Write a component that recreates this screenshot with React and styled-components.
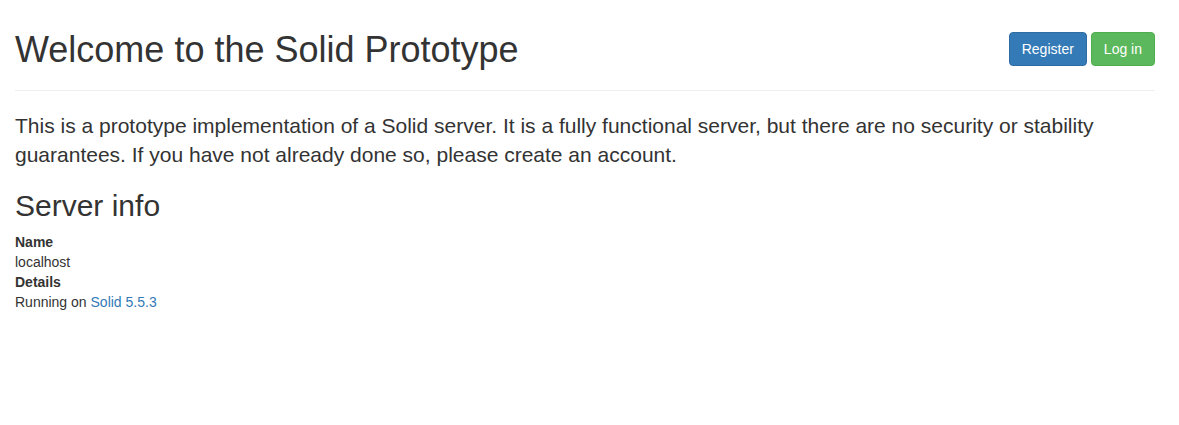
import React from 'react';
import styled, { createGlobalStyle } from 'styled-components';

const GlobalStyle = createGlobalStyle`
  html, body {
    margin: 0;
    padding: 0;
    background: #fff;
  }
  body {
    font-family: "Liberation Sans", Arial, Helvetica, sans-serif;
    font-size: 14px;
    line-height: 1.42857143;
    color: #333;
  }
  * {
    box-sizing: border-box;
  }
`

const Container = styled.div`
  width: 1170px;
  padding: 0 15px;
`

const PageHeader = styled.div`
  display: flex;
  justify-content: space-between;
  align-items: flex-start;
  padding: 30px 0 10px;
  margin-bottom: 20px;
  border-bottom: 1px solid #eee;
`

const Title = styled.h1`
  margin: 0 0 10px;
  font-size: 36px;
  font-weight: 500;
  line-height: 1.1;
`

const Actions = styled.div`
  display: flex;
  gap: 4px;
  margin-top: 2px;
`

const Button = styled.button`
  font-family: inherit;
  font-size: 14px;
  line-height: 1.42857143;
  padding: 6px 12px;
  color: #fff;
  border-radius: 4px;
  cursor: pointer;
  background: ${p => (p.$variant === 'success' ? '#5cb85c' : '#337ab7')};
  border: 1px solid ${p => (p.$variant === 'success' ? '#4cae4c' : '#2e6da4')};
`

const Lead = styled.p`
  margin: 0 0 20px;
  font-size: 21px;
  font-weight: 300;
  line-height: 1.4;
`

const SubTitle = styled.h2`
  margin: 20px 0 10px;
  font-size: 30px;
  font-weight: 500;
  line-height: 1.1;
`

const InfoList = styled.dl`
  margin: 0 0 20px;

  & dt {
    font-weight: 700;
  }
  & dd {
    margin: 0;
  }
  & a {
    color: #337ab7;
    text-decoration: none;
  }
`

export default function App() {
  return (
    <>
      <GlobalStyle />
      <Container>
        <PageHeader>
          <Title>Welcome to the Solid Prototype</Title>
          <Actions>
            <Button>Register</Button>
            <Button $variant="success">Log in</Button>
          </Actions>
        </PageHeader>
        <Lead>
          This is a prototype implementation of a Solid server. It is a fully functional server, but there are no security or stability guarantees. If you have not already done so, please create an account.
        </Lead>
        <SubTitle>Server info</SubTitle>
        <InfoList>
          <dt>Name</dt>
          <dd>localhost</dd>
          <dt>Details</dt>
          <dd>Running on <a href="#">Solid 5.5.3</a></dd>
        </InfoList>
      </Container>
    </>
  )
}
